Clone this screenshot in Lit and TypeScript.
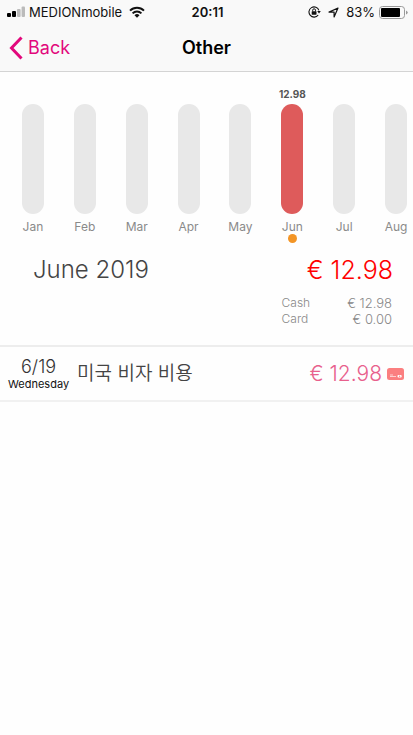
import { LitElement, html, css, nothing } from "lit";
import { customElement, state } from "lit/decorators.js";
import { classMap } from "lit/directives/class-map.js";

interface Month {
  label: string;
  name: string;
  amount?: string;
}

const MONTHS: Month[] = [
  { label: "Jan", name: "January" },
  { label: "Feb", name: "February" },
  { label: "Mar", name: "March" },
  { label: "Apr", name: "April" },
  { label: "May", name: "May" },
  { label: "Jun", name: "June", amount: "12.98" },
  { label: "Jul", name: "July" },
  { label: "Aug", name: "August" },
];

@customElement("status-bar")
class StatusBar extends LitElement {
  static styles = css`
    :host {
      display: grid;
      grid-template-columns: 1fr auto 1fr;
      align-items: center;
      height: 24px;
      padding: 0 5px 0 7px;
      font-size: 13px;
      line-height: 16px;
      color: #111;
    }
    .side {
      display: flex;
      align-items: center;
      gap: 4px;
    }
    .end {
      justify-content: flex-end;
      gap: 7px;
    }
    .power {
      display: flex;
      align-items: center;
      gap: 4px;
    }
    .time {
      font-weight: 600;
    }
    svg {
      display: block;
      flex: none;
    }
    .wifi {
      margin-left: 3px;
    }
  `;

  render() {
    return html`
      <div class="side">
        <svg width="18" height="12" viewBox="0 0 18 12">
          <rect x="0" y="7" width="4" height="4" rx="1" />
          <rect x="5" y="5" width="4" height="6" rx="1" />
          <rect x="10" y="3" width="3.6" height="8" rx="1" fill="#bbb" />
          <rect x="14.6" y="0.5" width="3.4" height="10.5" rx="1" fill="#bbb" />
        </svg>
        <span>MEDIONmobile</span>
        <svg class="wifi" width="16" height="12" viewBox="0 0 16 12">
          <g fill="none" stroke="#111" stroke-width="2">
            <path d="M1 4.6a10 10 0 0 1 14 0" />
            <path d="M3.6 7.4a6.2 6.2 0 0 1 8.8 0" />
          </g>
          <path d="M5.5 9.2a3.5 3.5 0 0 1 5 0L8 11.8z" fill="#111" />
        </svg>
      </div>
      <span class="time">20:11</span>
      <div class="side end">
        <svg width="13" height="12" viewBox="0 0 13 12">
          <path
            d="M10.9 4.4A5.1 5.1 0 1 0 10.2 9"
            fill="none"
            stroke="#111"
            stroke-width="1.1"
          />
          <path d="M9.2 5h3.6L11 7.5z" fill="#111" />
          <rect x="3.7" y="5.3" width="4.8" height="3.4" rx="0.4" fill="#111" />
          <path
            d="M4.7 5.4V4.2a1.4 1.4 0 0 1 2.8 0v1.2"
            fill="none"
            stroke="#111"
          />
        </svg>
        <svg width="11" height="11" viewBox="0 0 11 11">
          <path
            d="M10 1L6.1 10V5.1H1z"
            fill="none"
            stroke="#111"
            stroke-width="1.2"
            stroke-linejoin="round"
          />
        </svg>
        <div class="power">
          <span>83%</span>
          <svg width="29" height="13" viewBox="0 0 29 13">
            <rect
              x="0.5"
              y="0.5"
              width="25"
              height="12"
              rx="3"
              fill="none"
              stroke="#999"
            />
            <rect x="2" y="2" width="19" height="9" rx="1" />
            <path d="M27 4.4q1.7.7 1.7 2.1T27 8.6z" fill="#999" />
          </svg>
        </div>
      </div>
    `;
  }
}

@customElement("month-chart")
class MonthChart extends LitElement {
  @state() private selected = 5;

  static styles = css`
    :host {
      display: block;
      overflow: hidden;
    }
    .strip {
      display: grid;
      grid-template-columns: repeat(8, 1fr);
      margin: 0 -9px 0 7px;
    }
    .month {
      display: flex;
      flex-direction: column;
      align-items: center;
      border: 0;
      padding: 0;
      background: none;
      font: inherit;
      color: #8a8a8a;
      cursor: pointer;
    }
    .value {
      height: 16px;
      font-size: 10px;
      line-height: 12px;
      font-weight: 700;
      color: #555;
    }
    .bar {
      width: 22px;
      height: 110px;
      border-radius: 11px;
      background: #e8e8e8;
    }
    .filled {
      background: #de5b5b;
    }
    .label {
      margin-top: 5px;
      font-size: 12px;
      line-height: 15px;
    }
    .dot {
      width: 9px;
      height: 9px;
      border-radius: 50%;
    }
    .current {
      background: #f39526;
    }
  `;

  render() {
    return html`
      <div class="strip">
        ${MONTHS.map(
          (m, i) => html`
            <button
              class="month"
              aria-label=${m.name}
              aria-pressed=${i === this.selected}
              @click=${() => (this.selected = i)}
            >
              <span class="value">${m.amount ?? nothing}</span>
              <span class=${classMap({ bar: true, filled: !!m.amount })}></span>
              <span class="label">${m.label}</span>
              <span
                class=${classMap({ dot: true, current: i === this.selected })}
              ></span>
            </button>
          `
        )}
      </div>
    `;
  }
}

@customElement("app-root")
class AppRoot extends LitElement {
  static styles = css`
    :host {
      display: block;
      min-height: 100vh;
      background: #fefefe;
      font-family: Inter, "Noto Sans CJK KR", sans-serif;
    }
    .top {
      background: #f9f9f9;
      border-bottom: 1px solid #d4d4d4;
    }
    .nav {
      display: grid;
      grid-template-columns: 1fr auto 1fr;
      align-items: center;
      height: 47px;
      padding: 0 9px;
    }
    .back {
      display: flex;
      align-items: center;
      gap: 5px;
      justify-self: start;
      font-size: 18px;
      line-height: 24px;
      color: #e2087c;
      text-decoration: none;
    }
    h1 {
      margin: 0;
      font-size: 18px;
      line-height: 24px;
      font-weight: 600;
      color: #000;
    }
    month-chart {
      margin-top: 16px;
    }
    .summary {
      padding: 10px 20px 18px 33px;
      border-bottom: 2px solid #ededed;
    }
    .total {
      display: flex;
      justify-content: space-between;
      line-height: 34px;
    }
    h2 {
      margin: 0;
      font-size: 24px;
      font-weight: 300;
      color: #444;
    }
    .sum {
      font-size: 25px;
      font-weight: 300;
      color: #f00;
    }
    .split {
      display: grid;
      grid-template-columns: auto auto;
      justify-content: end;
      column-gap: 37px;
      margin: 8px 1px 0 0;
      font-size: 13px;
      line-height: 16px;
      font-weight: 300;
      color: #888;
    }
    .split dt,
    .split dd {
      margin: 0;
    }
    .split dt {
      font-size: 12px;
    }
    .split dd {
      text-align: right;
    }
    .list {
      margin: 0;
      padding: 0;
      list-style: none;
    }
    .entry {
      display: flex;
      align-items: center;
      gap: 8px;
      height: 53px;
      padding: 0 9px 0 8px;
      border-bottom: 2px solid #f1f1f1;
    }
    .date {
      display: flex;
      flex-direction: column;
      align-items: center;
    }
    .day {
      font-size: 18px;
      line-height: 20px;
      font-weight: 300;
      color: #333;
    }
    .weekday {
      font-size: 11px;
      line-height: 14px;
      color: #111;
    }
    .title {
      flex: 1;
      font-size: 19px;
      line-height: 26px;
      font-weight: 350;
      color: #444;
    }
    .price {
      display: flex;
      align-items: center;
      gap: 5px;
      font-size: 21px;
      line-height: 26px;
      font-weight: 300;
      color: #e8608c;
    }
    svg {
      display: block;
    }
  `;

  render() {
    return html`
      <header class="top">
        <status-bar></status-bar>
        <nav class="nav">
          <a class="back" href="#">
            <svg width="14" height="24" viewBox="0 0 14 24">
              <path
                d="M12.5 1.5L2.5 12l10 10.5"
                fill="none"
                stroke="#e2087c"
                stroke-width="3"
              />
            </svg>
            <span>Back</span>
          </a>
          <h1>Other</h1>
        </nav>
      </header>
      <main>
        <month-chart></month-chart>
        <section class="summary">
          <div class="total">
            <h2>June 2019</h2>
            <span class="sum">€ 12.98</span>
          </div>
          <dl class="split">
            <dt>Cash</dt>
            <dd>€ 12.98</dd>
            <dt>Card</dt>
            <dd>€ 0.00</dd>
          </dl>
        </section>
        <ul class="list">
          <li class="entry">
            <div class="date">
              <span class="day">6/19</span>
              <span class="weekday">Wednesday</span>
            </div>
            <span class="title" lang="ko">미국 비자 비용</span>
            <div class="price">
              <span>€ 12.98</span>
              <svg width="17" height="12" viewBox="0 0 17 12">
                <rect width="17" height="12" rx="2.5" fill="#fb7f80" />
                <path
                  d="M3 7h3M3 8.5h6"
                  stroke="#fff"
                  stroke-width="0.8"
                  opacity="0.8"
                />
                <rect x="10.5" y="7" width="4.2" height="2.6" rx="1" fill="#fff" />
                <circle cx="12.6" cy="8.3" r="0.7" fill="#fb7f80" />
              </svg>
            </div>
          </li>
        </ul>
      </main>
    `;
  }
}
